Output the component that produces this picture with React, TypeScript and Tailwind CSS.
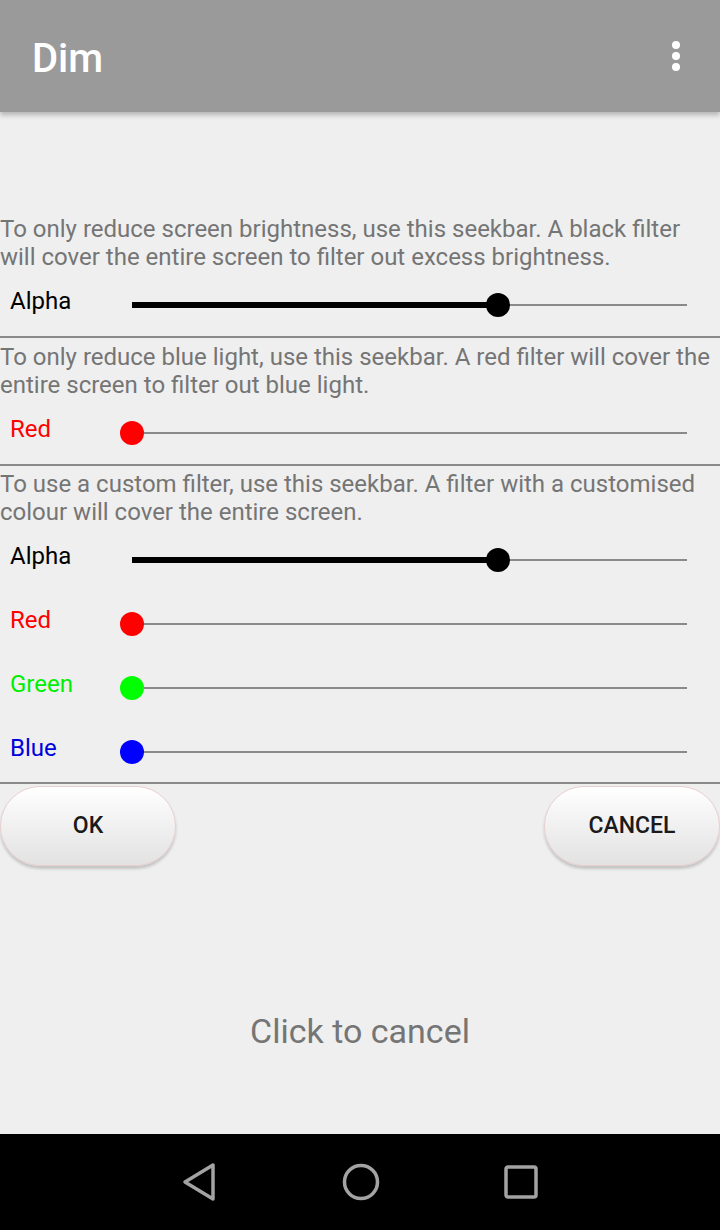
import React from 'react';

type SliderProps = { value: number; color: string; thick?: boolean };

const Seekbar: React.FC<SliderProps> = ({ value, color, thick }) => {
  return (
    <div className="relative flex-1 h-[24px] mr-[21px] mt-[3px]">
      <div className="absolute left-[12px] right-[12px] top-[11px] h-[2px] bg-[#8a8a8a]" />
      {thick && (
        <div
          className="absolute left-[12px] top-[9px] h-[6px] bg-black"
          style={{ width: `calc((100% - 24px) * ${value})` }}
        />
      )}
      <div
        className="absolute top-0 w-[24px] h-[24px] rounded-full"
        style={{ left: `calc((100% - 24px) * ${value})`, backgroundColor: color }}
      />
    </div>
  );
};

const Row: React.FC<{ label: string; labelColor: string; value: number; thumb: string; thick?: boolean; h?: string }> = ({
  label,
  labelColor,
  value,
  thumb,
  thick,
  h = 'h-[64px]',
}) => (
  <div className={`flex items-center ${h}`}>
    <div className="w-[120px] pl-[10px] pb-[5px] text-[24px] leading-none" style={{ color: labelColor }}>
      {label}
    </div>
    <Seekbar value={value} color={thumb} thick={thick} />
  </div>
);

const Divider = () => <div className="h-[2px] bg-[#8a8a8a]" />;

const Desc: React.FC<{ children: React.ReactNode; className?: string }> = ({ children, className = '' }) => (
  <p className={`text-[24px] leading-[28px] text-[#757575] ${className}`}>{children}</p>
);

export default function App() {
  return (
    <div className="w-[720px] h-[1230px] flex flex-col bg-[#efefef] overflow-hidden" style={{ fontFamily: 'Roboto, "Noto Sans", sans-serif' }}>
      <header className="relative z-10 h-[112px] shrink-0 bg-[#9a9a9a] flex items-center justify-between pl-[32px] pr-[40px] shadow-[0_3px_5px_rgba(0,0,0,0.25)]">
        <h1 className="text-[40px] font-medium text-white leading-none pt-[5px]">Dim</h1>
        <div className="flex flex-col gap-[3px]">
          <span className="block w-[8px] h-[8px] rounded-full bg-white" />
          <span className="block w-[8px] h-[8px] rounded-full bg-white" />
          <span className="block w-[8px] h-[8px] rounded-full bg-white" />
        </div>
      </header>

      <main className="flex-1 flex flex-col pt-[103px]">
        <Desc>
          To only reduce screen brightness, use this seekbar. A black filter will cover the entire screen to filter out excess brightness.
        </Desc>
        <Row label="Alpha" labelColor="#000" value={0.66} thumb="#000" thick h="h-[65px]" />
        <Divider />

        <Desc className="pt-[5px]">
          To only reduce blue light, use this seekbar. A red filter will cover the entire screen to filter out blue light.
        </Desc>
        <Row label="Red" labelColor="#ff0000" value={0} thumb="#ff0000" h="h-[65px]" />
        <Divider />

        <Desc className="pt-[4px]">
          To use a custom filter, use this seekbar. A filter with a customised colour will cover the entire screen.
        </Desc>
        <Row label="Alpha" labelColor="#000" value={0.66} thumb="#000" thick />
        <Row label="Red" labelColor="#ff0000" value={0} thumb="#ff0000" />
        <Row label="Green" labelColor="#00ee00" value={0} thumb="#00ff00" />
        <Row label="Blue" labelColor="#0000dd" value={0} thumb="#0000ff" />
        <Divider />

        <div className="flex justify-between pt-[2px]">
          <button className="w-[176px] h-[80px] rounded-[40px] border border-[#e9cfcf] bg-gradient-to-b from-white to-[#e2e2e2] shadow-[0_3px_3px_rgba(0,0,0,0.18)] text-[23px] font-medium text-[#1a1a1a]">
            OK
          </button>
          <button className="w-[176px] h-[80px] rounded-[40px] border border-[#e9cfcf] bg-gradient-to-b from-white to-[#e2e2e2] shadow-[0_3px_3px_rgba(0,0,0,0.18)] text-[23px] font-medium text-[#1a1a1a]">
            CANCEL
          </button>
        </div>

        <p className="mt-[146px] text-center text-[34px] leading-[38px] text-[#757575]">Click to cancel</p>
      </main>

      <nav className="h-[96px] shrink-0 bg-black flex items-center justify-center gap-[124px]">
        <svg width="36" height="40" viewBox="0 0 36 40" fill="none" stroke="#a3a3a3" strokeWidth="3.5" strokeLinejoin="round">
          <path d="M31 3 L31 37 L3 20 Z" />
        </svg>
        <svg width="38" height="38" viewBox="0 0 38 38" fill="none" stroke="#a3a3a3" strokeWidth="3.5">
          <circle cx="19" cy="19" r="16.5" />
        </svg>
        <svg width="34" height="34" viewBox="0 0 34 34" fill="none" stroke="#a3a3a3" strokeWidth="3.5">
          <rect x="2" y="2" width="30" height="30" rx="2" />
        </svg>
      </nav>
    </div>
  );
}
